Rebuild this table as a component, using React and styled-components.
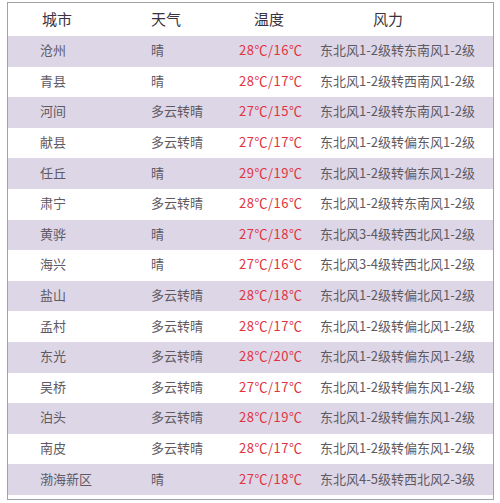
import React from "react";
import styled, { createGlobalStyle } from "styled-components";

const Global = createGlobalStyle`
  html, body { margin: 0; padding: 0; background: #ffffff; }
  body { font-family: "Noto Sans CJK SC", "Noto Sans", sans-serif; }
`;

const Page = styled.div`
  padding: 2px 0 0 7px;
`;

const Table = styled.div`
  width: 487px;
  box-sizing: border-box;
  border: 1px solid #a3a1a6;
  padding-bottom: 4px;
  background: #fff;
`;

const Row = styled.div`
  display: grid;
  grid-template-columns: 143px 88px 81px 1fr;
  align-items: center;
  height: ${(p) => p.$h}px;
  background: ${(p) => (p.$shade ? "#ddd6e7" : "#ffffff")};
`;

const HeadCell = styled.div`
  padding-left: ${(p) => p.$pad}px;
  font-size: 15px;
  color: #3b3242;
  line-height: 1;
  margin-top: -2px;
`;

const Cell = styled.div`
  padding-left: ${(p) => p.$pad || 0}px;
  font-size: 13px;
  letter-spacing: ${(p) => p.$ls || 0}px;
  color: ${(p) => p.$color || "#5e5a63"};
  line-height: 1;
  white-space: nowrap;
  margin-top: -3px;
`;

const data = [
  ["沧州", "晴", "28℃/16℃", "东北风1-2级转东南风1-2级"],
  ["青县", "晴", "28℃/17℃", "东北风1-2级转西南风1-2级"],
  ["河间", "多云转晴", "27℃/15℃", "东北风1-2级转东南风1-2级"],
  ["献县", "多云转晴", "27℃/17℃", "东北风1-2级转偏东风1-2级"],
  ["任丘", "晴", "29℃/19℃", "东北风1-2级转偏东风1-2级"],
  ["肃宁", "多云转晴", "28℃/16℃", "东北风1-2级转东南风1-2级"],
  ["黄骅", "晴", "27℃/18℃", "东北风3-4级转西北风1-2级"],
  ["海兴", "晴", "27℃/16℃", "东北风3-4级转西北风1-2级"],
  ["盐山", "多云转晴", "28℃/18℃", "东北风1-2级转偏北风1-2级"],
  ["孟村", "多云转晴", "28℃/17℃", "东北风1-2级转偏北风1-2级"],
  ["东光", "多云转晴", "28℃/20℃", "东北风1-2级转偏东风1-2级"],
  ["吴桥", "多云转晴", "27℃/17℃", "东北风1-2级转偏东风1-2级"],
  ["泊头", "多云转晴", "28℃/19℃", "东北风1-2级转偏东风1-2级"],
  ["南皮", "多云转晴", "28℃/17℃", "东北风1-2级转偏东风1-2级"],
  ["渤海新区", "晴", "27℃/18℃", "东北风4-5级转西北风2-3级"],
];

export default function App() {
  return (
    <>
      <Global />
      <Page>
        <Table>
          <Row $h={33}>
            <HeadCell $pad={34}>城市</HeadCell>
            <HeadCell $pad={-3}>天气</HeadCell>
            <HeadCell $pad={15}>温度</HeadCell>
            <HeadCell $pad={53}>风力</HeadCell>
          </Row>
          {data.map((r, i) => (
            <Row key={r[0]} $h={30.6} $shade={i % 2 === 0}>
              <Cell $pad={32}>{r[0]}</Cell>
              <Cell>{r[1]}</Cell>
              <Cell $color="#e2323e" $ls={0.5}>{r[2]}</Cell>
              <Cell>{r[3]}</Cell>
            </Row>
          ))}
        </Table>
      </Page>
    </>
  );
}
